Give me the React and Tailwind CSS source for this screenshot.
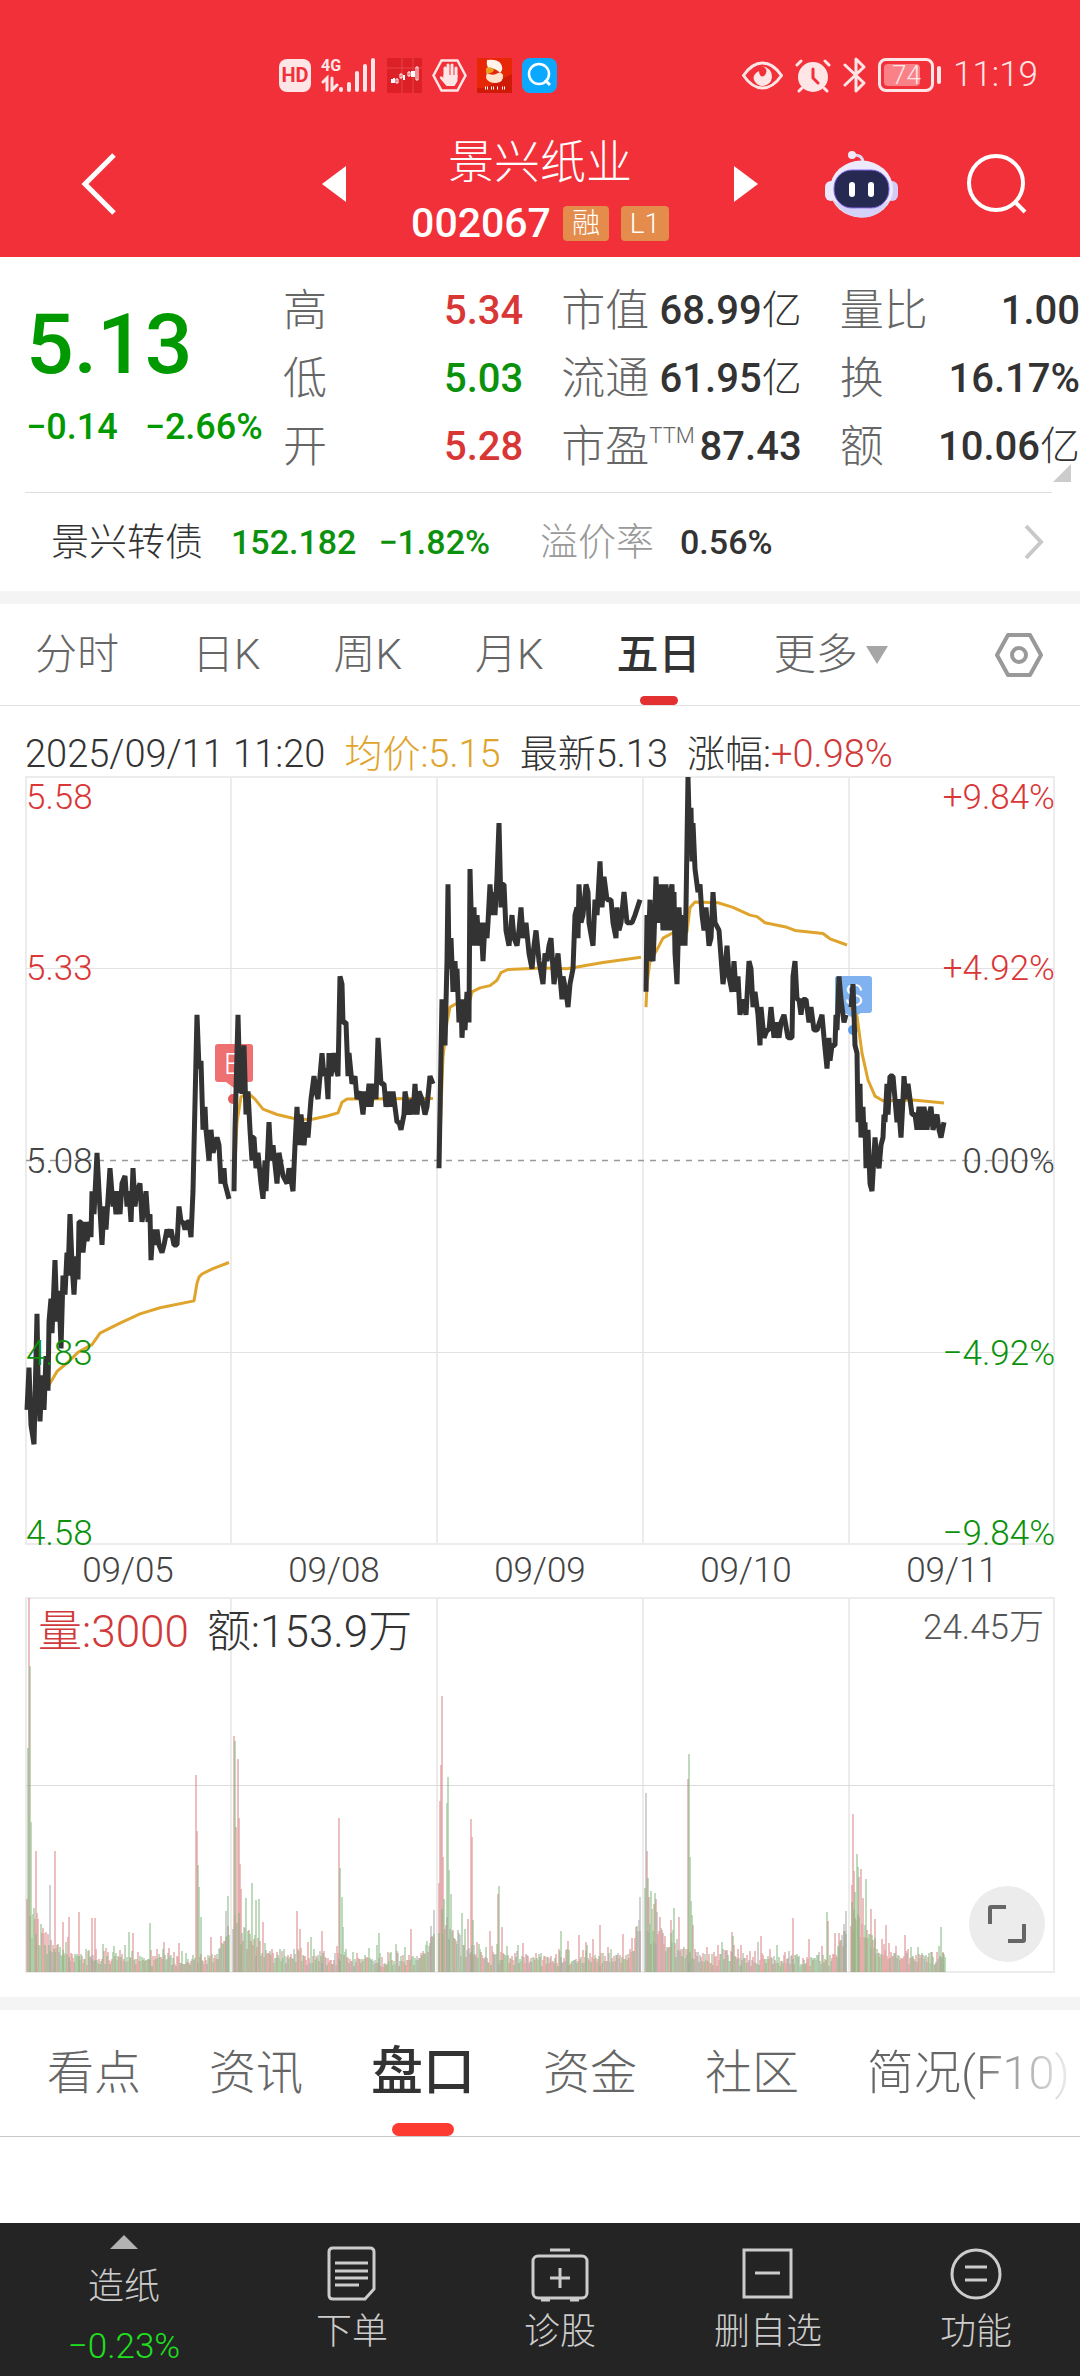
import React from 'react';

const GREEN = '#0b910b';
const RED = '#d93636';

// one array per trading day, flat [x, price, x, price, ...]
const PRICE = [
  [1, 4.755, 3, 4.81, 5, 4.735, 8, 4.71, 11, 4.88, 12, 4.8, 14, 4.74, 16, 4.8, 18, 4.755, 20, 4.825, 22, 4.78, 23, 4.87, 25, 4.9, 26, 4.855, 29, 4.95, 31, 4.87, 33, 4.91, 35, 4.835, 37, 4.93, 39, 4.905, 41, 4.96, 42, 4.93, 44, 5.01, 46, 4.945, 48, 4.905, 50, 4.955, 52, 4.925, 53, 5, 55, 5, 57, 4.96, 60, 5, 61, 4.975, 64, 5, 65, 4.98, 66, 5.04, 68, 5.01, 71, 5.09, 73, 5.04, 76, 4.97, 78, 5.02, 80, 4.99, 82, 5.03, 84, 5.07, 87, 5.02, 88, 5.04, 90, 5.01, 92, 5.04, 94, 5.01, 96, 5.05, 99, 5.06, 101, 5.02, 103, 5.04, 105, 5, 107, 5.07, 109, 5.02, 111, 5.04, 114, 5.05, 116, 5, 120, 5.04, 122, 5, 124, 5.01, 125, 4.95, 127, 4.99, 129, 4.97, 131, 4.99, 133, 4.97, 136, 4.96, 138, 4.97, 141, 4.99, 143, 4.98, 145, 4.99, 148, 4.97, 151, 4.97, 153, 5.02, 155, 5, 157, 5, 159, 4.99, 161, 5, 163, 5, 165, 4.98, 167, 5.04, 171, 5.27, 173, 5.2, 175, 5.21, 177, 5.12, 179, 5.15, 180, 5.12, 183, 5.08, 185, 5.12, 187, 5.09, 191, 5.11, 193, 5.1, 195, 5.05, 198, 5.07, 199, 5.05, 203, 5.03],
  [208, 5.04, 209, 5.12, 212, 5.27, 214, 5.17, 216, 5.17, 218, 5.23, 220, 5.14, 222, 5.17, 224, 5.12, 226, 5.08, 227, 5.11, 228, 5.11, 230, 5.07, 232, 5.09, 235, 5.05, 237, 5.03, 239, 5.08, 240, 5.04, 243, 5.13, 245, 5.08, 247, 5.1, 251, 5.05, 253, 5.09, 257, 5.06, 261, 5.05, 263, 5.07, 267, 5.04, 269, 5.1, 271, 5.15, 273, 5.1, 275, 5.14, 278, 5.1, 280, 5.13, 282, 5.11, 285, 5.16, 288, 5.19, 290, 5.17, 292, 5.16, 296, 5.22, 298, 5.19, 300, 5.2, 302, 5.16, 303, 5.22, 305, 5.19, 308, 5.22, 310, 5.2, 312, 5.19, 314, 5.32, 316, 5.31, 317, 5.26, 320, 5.26, 322, 5.19, 323, 5.22, 326, 5.18, 329, 5.19, 331, 5.16, 334, 5.17, 337, 5.14, 339, 5.17, 341, 5.15, 343, 5.18, 345, 5.15, 347, 5.18, 350, 5.16, 352, 5.24, 355, 5.18, 358, 5.18, 360, 5.15, 363, 5.17, 365, 5.15, 367, 5.17, 371, 5.13, 373, 5.13, 375, 5.12, 378, 5.14, 379, 5.17, 383, 5.14, 386, 5.16, 387, 5.14, 389, 5.18, 391, 5.14, 393, 5.17, 396, 5.16, 399, 5.14, 401, 5.15, 404, 5.19, 407, 5.18],
  [413, 5.07, 416, 5.29, 419, 5.23, 421, 5.34, 422, 5.44, 423, 5.33, 425, 5.37, 427, 5.3, 429, 5.34, 430, 5.31, 431, 5.33, 433, 5.26, 435, 5.29, 436, 5.24, 438, 5.29, 439, 5.25, 441, 5.3, 443, 5.26, 444, 5.46, 446, 5.36, 448, 5.41, 449, 5.36, 451, 5.4, 453, 5.36, 455, 5.39, 457, 5.34, 459, 5.39, 461, 5.37, 462, 5.39, 464, 5.44, 466, 5.4, 467, 5.43, 469, 5.4, 471, 5.45, 473, 5.52, 475, 5.41, 476, 5.44, 478, 5.44, 480, 5.38, 483, 5.36, 486, 5.4, 488, 5.37, 491, 5.36, 493, 5.38, 495, 5.41, 497, 5.37, 500, 5.39, 503, 5.35, 506, 5.33, 508, 5.36, 510, 5.38, 513, 5.34, 517, 5.31, 519, 5.35, 521, 5.34, 523, 5.36, 525, 5.37, 528, 5.31, 532, 5.35, 534, 5.32, 536, 5.29, 537, 5.32, 540, 5.3, 542, 5.28, 544, 5.31, 547, 5.33, 549, 5.4, 551, 5.41, 552, 5.37, 553, 5.44, 555, 5.39, 557, 5.4, 560, 5.44, 562, 5.43, 563, 5.39, 567, 5.36, 569, 5.42, 571, 5.4, 574, 5.47, 576, 5.41, 578, 5.45, 581, 5.42, 585, 5.42, 587, 5.39, 590, 5.37, 591, 5.41, 593, 5.38, 595, 5.39, 598, 5.43, 601, 5.39, 606, 5.39, 609, 5.4, 614, 5.42],
  [620, 5.3, 621, 5.4, 622, 5.34, 624, 5.42, 625, 5.35, 627, 5.34, 628, 5.37, 630, 5.45, 632, 5.39, 635, 5.44, 637, 5.38, 640, 5.44, 642, 5.38, 643, 5.42, 646, 5.44, 647, 5.38, 648, 5.43, 649, 5.35, 651, 5.31, 653, 5.41, 655, 5.36, 657, 5.4, 659, 5.36, 660, 5.41, 662, 5.58, 664, 5.48, 665, 5.54, 666, 5.47, 667, 5.52, 669, 5.46, 672, 5.43, 674, 5.44, 676, 5.4, 678, 5.38, 680, 5.41, 683, 5.36, 685, 5.37, 687, 5.43, 689, 5.39, 693, 5.38, 697, 5.31, 699, 5.33, 701, 5.36, 703, 5.32, 706, 5.3, 708, 5.34, 710, 5.3, 712, 5.32, 714, 5.27, 717, 5.29, 720, 5.27, 723, 5.34, 725, 5.33, 727, 5.28, 729, 5.3, 732, 5.27, 734, 5.23, 735, 5.28, 738, 5.24, 741, 5.25, 743, 5.25, 745, 5.28, 748, 5.24, 750, 5.26, 753, 5.24, 755, 5.26, 758, 5.27, 762, 5.24, 766, 5.24, 767, 5.32, 769, 5.34, 771, 5.29, 773, 5.29, 775, 5.27, 777, 5.29, 780, 5.29, 783, 5.26, 785, 5.28, 788, 5.25, 791, 5.25, 796, 5.27, 798, 5.24, 801, 5.2, 803, 5.24, 804, 5.21, 806, 5.23, 809, 5.23, 810, 5.27, 811, 5.25, 813, 5.32, 815, 5.29, 818, 5.26, 820, 5.27],
  [825, 5.28, 827, 5.31, 829, 5.23, 831, 5.22, 832, 5.13, 834, 5.18, 835, 5.11, 837, 5.15, 838, 5.11, 839, 5.13, 840, 5.07, 842, 5.12, 844, 5.05, 846, 5.04, 849, 5.11, 851, 5.08, 853, 5.07, 855, 5.1, 857, 5.11, 858, 5.14, 859, 5.13, 861, 5.18, 862, 5.14, 864, 5.19, 867, 5.19, 869, 5.16, 871, 5.13, 872, 5.16, 875, 5.11, 877, 5.16, 878, 5.19, 880, 5.16, 882, 5.18, 884, 5.16, 886, 5.14, 889, 5.14, 891, 5.12, 893, 5.15, 896, 5.12, 898, 5.15, 901, 5.12, 903, 5.14, 905, 5.15, 907, 5.12, 911, 5.14, 913, 5.12, 915, 5.11, 918, 5.13],
];

const AVERAGE = [
  [7, 4.775, 22, 4.785, 31, 4.805, 41, 4.816, 52, 4.83, 66, 4.84, 74, 4.855, 94, 4.868, 114, 4.88, 134, 4.888, 168, 4.897, 171, 4.92, 173, 4.928, 176, 4.932, 187, 4.939, 203, 4.947],
  [208, 5.05, 211, 5.13, 215, 5.163, 222, 5.168, 229, 5.16, 237, 5.147, 251, 5.14, 267, 5.135, 284, 5.133, 301, 5.138, 312, 5.142, 316, 5.156, 321, 5.16, 407, 5.161],
  [414, 5.11, 417, 5.215, 421, 5.26, 424, 5.28, 431, 5.285, 444, 5.289, 446, 5.3, 454, 5.305, 464, 5.308, 471, 5.315, 475, 5.325, 482, 5.329, 517, 5.331, 541, 5.33, 577, 5.338, 615, 5.345],
  [620, 5.28, 621, 5.31, 624, 5.34, 631, 5.355, 637, 5.37, 647, 5.377, 661, 5.378, 664, 5.41, 669, 5.417, 692, 5.416, 707, 5.41, 724, 5.4, 731, 5.398, 739, 5.39, 761, 5.384, 769, 5.38, 797, 5.376, 804, 5.369, 821, 5.361],
  [825, 5.28, 831, 5.268, 836, 5.22, 842, 5.185, 849, 5.164, 857, 5.158, 887, 5.159, 918, 5.155],
];

// [x, height, direction] for the minutes that stand out; r = up, g = down, n = flat
const SPIKES = [
  [2, 224, 'g'], [3, 374, 'r'], [4, 306, 'g'], [5, 150, 'g'], [10, 121, 'r'], [24, 87, 'n'], [29, 121, 'r'], [37, 50, 'r'], [43, 55, 'r'], [53, 60, 'r'], [66, 54, 'r'], [69, 54, 'r'], [103, 40, 'g'], [107, 39, 'r'], [124, 49, 'g'], [153, 29, 'r'], [170, 197, 'r'], [171, 141, 'r'], [172, 107, 'g'], [173, 85, 'g'], [175, 55, 'g'], [200, 61, 'n'], [202, 76, 'g'],
  [208, 236, 'r'], [209, 231, 'g'], [210, 145, 'r'], [212, 213, 'r'], [213, 154, 'r'], [214, 108, 'r'], [215, 83, 'r'], [220, 74, 'g'], [226, 89, 'g'], [230, 72, 'g'], [233, 73, 'g'], [237, 50, 'r'], [271, 61, 'r'], [274, 43, 'r'], [296, 41, 'r'], [313, 154, 'r'], [314, 104, 'g'], [316, 75, 'g'], [317, 45, 'g'], [353, 39, 'g'], [370, 28, 'g'], [405, 46, 'n'], [408, 62, 'n'],
  [413, 89, 'r'], [414, 171, 'r'], [415, 207, 'r'], [416, 276, 'r'], [417, 115, 'r'], [421, 169, 'g'], [422, 195, 'g'], [423, 102, 'g'], [425, 78, 'g'], [436, 59, 'g'], [445, 153, 'r'], [446, 135, 'r'], [447, 52, 'g'], [464, 41, 'r'], [472, 78, 'r'], [473, 86, 'g'], [476, 45, 'r'], [535, 41, 'g'], [542, 31, 'r'], [553, 37, 'r'], [560, 30, 'r'], [574, 47, 'r'], [612, 41, 'n'], [614, 75, 'n'],
  [619, 58, 'g'], [620, 179, 'n'], [621, 121, 'r'], [622, 94, 'g'], [623, 75, 'r'], [625, 81, 'g'], [628, 68, 'r'], [630, 73, 'r'], [634, 55, 'r'], [645, 52, 'r'], [648, 64, 'g'], [653, 55, 'r'], [662, 193, 'r'], [663, 218, 'g'], [664, 115, 'g'], [665, 71, 'g'], [666, 57, 'g'], [667, 47, 'r'], [696, 30, 'g'], [706, 40, 'r'], [707, 36, 'g'], [715, 27, 'r'], [735, 36, 'r'], [767, 54, 'r'], [801, 60, 'g'], [802, 51, 'r'], [809, 39, 'r'], [813, 39, 'r'], [818, 48, 'n'], [820, 61, 'n'],
  [826, 87, 'r'], [827, 158, 'r'], [828, 101, 'r'], [829, 80, 'g'], [831, 118, 'g'], [832, 105, 'g'], [833, 95, 'r'], [835, 103, 'r'], [840, 93, 'g'], [845, 63, 'r'], [849, 53, 'r'], [860, 47, 'r'], [879, 37, 'r'], [915, 45, 'g'], [917, 20, 'r'],
];

const SESSIONS = [[1, 203], [207, 408], [413, 614], [619, 820], [825, 919]];
const TONES = { r: '#d98080', g: '#7fb47a', n: '#a3a3a3' };

function toPath(flat) {
  let d = '';
  for (let i = 0; i < flat.length; i += 2) {
    d += `${i ? 'L' : 'M'}${flat[i]} ${((5.58 - flat[i + 1]) * 767).toFixed(1)}`;
  }
  return d;
}

function volumePaths() {
  const out = { r: '', g: '', n: '' };
  let seed = 11;
  const rand = () => {
    seed = (seed * 16807) % 2147483647;
    return seed / 2147483647;
  };
  SESSIONS.forEach(([from, to]) => {
    for (let x = from; x <= to; x += 1) {
      const t = x - from;
      const close = to < 900 ? Math.max(0, 14 - (to - x)) * 1.8 : 0;
      const h = 5 + rand() * 10 + rand() * rand() * rand() * 34 + 62 * Math.exp(-t / 18) * (0.4 + rand() * 0.8) + close;
      const k = rand();
      const tone = k < 0.46 ? 'r' : k < 0.88 ? 'g' : 'n';
      out[tone] += `M${x} 374V${(374 - h).toFixed(0)}`;
    }
  });
  SPIKES.forEach(([x, h, tone]) => {
    out[tone] += `M${x} 374V${374 - h}`;
  });
  return out;
}

const VOLUME = volumePaths();

function StatusBar() {
  return (
    <div className="flex h-[110px] items-center justify-between pt-10 pr-[42px] pl-[279px] text-[#ffe6e6]">
      <div className="flex items-center gap-[10px]">
        <span className="flex h-[33px] w-8 items-center justify-center rounded-lg bg-[#ffe6e6] text-xl font-bold text-[#f13039]">HD</span>
        <div className="relative h-[34px] w-[56px]">
          <span className="absolute top-0 left-0 text-base leading-4 font-bold">4G</span>
          <svg className="h-full w-full" viewBox="0 0 56 34" fill="none" stroke="currentColor" strokeLinecap="round">
            <path d="M20 31v1M28 26v6M36 15v17M44 8v24M52 2v30" strokeWidth="4" />
            <path d="M2 24l4-4v12M11 20v12l5-5" strokeWidth="3" />
          </svg>
        </div>
        <svg className="h-[35px] w-[35px]" viewBox="0 0 35 35">
          <path d="M0 0h35v35H0z" fill="#dd2027" />
          <path d="M0 10h35M15 0v35M26 0v35" stroke="#e4444a" strokeWidth="1" />
          <path d="M5 21v4M7 20v5M17 17v5M25 13v6M27 13v6" stroke="#fff" strokeWidth="2" />
          <path d="M9 21h2v4H9zM13 16h2v4h-2zM21 14h2v4h-2zM29 9h2v13h-2z" fill="none" stroke="#fff" strokeWidth="1" />
        </svg>
        <svg className="h-[35px] w-[35px]" viewBox="0 0 35 35">
          <path d="M9.500 2.500h16l8 15-8 15h-16l-8-15z" fill="none" stroke="#ffe6e6" strokeWidth="2.500" />
          <path d="M13 19V10M16 18V7M20 18V7M24 19V10" stroke="#ffe6e6" strokeWidth="3" strokeLinecap="round" />
          <path d="M11.500 17h14v6l-3 5h-8l-6-7c-2-3 1-3 3-1z" fill="#ffe6e6" />
        </svg>
        <svg className="h-[35px] w-[35px]" viewBox="0 0 35 35">
          <path d="M0 0h35v35H0z" fill="#cf1a08" />
          <path d="M0 0h35v16L8 30H0z" fill="#e82706" />
          <path d="M10 2q11-1 14 4 3 5-1 9-4-5-12-5-2-4-1-8z" fill="#fff3ea" />
          <path d="M10 15q5 3 9 1 5-3 7 1 1 7-7 8-8 0-10-5 0-3 1-5z" fill="#ffe1cc" />
          <path d="M9 10q6-2 8 2-2 4-8 3z" fill="#e8a01c" />
          <path d="M8 30h3M14 30h3M20 30h2M25 30h3" stroke="#fff" strokeWidth="3" strokeDasharray="1 1" />
        </svg>
        <svg className="h-[35px] w-[35px]" viewBox="0 0 35 35" fill="none" stroke="#fff">
          <rect width="35" height="35" rx="8" fill="#0aa9ff" stroke="none" />
          <circle cx="17" cy="16" r="10" strokeWidth="2.500" />
          <path d="M23 22l5 5" strokeWidth="3" />
        </svg>
      </div>
      <div className="flex items-center gap-3">
        <svg className="h-[35px] w-[41px]" viewBox="0 0 41 35" fill="none" stroke="currentColor">
          <path d="M1.500 17.500Q10 5 20.500 5t19 12.500Q31 30 20.500 30T1.500 17.500z" strokeWidth="3" />
          <path d="M20 8q7 3 3 9-3 3-5 0-1-2-1-4-7 4-5 9 3 6 9 6 8-1 9-9 0-9-10-11z" fill="currentColor" stroke="none" />
        </svg>
        <svg className="h-[35px] w-9" viewBox="0 0 36 35" fill="none" stroke="currentColor" strokeLinecap="round">
          <circle cx="18" cy="19" r="15" fill="currentColor" stroke="none" />
          <path d="M2 7l4-4M34 7l-4-4M7 30l-3 3M29 30l3 3" strokeWidth="3" />
          <path d="M18 11v9l5 5" stroke="#f13039" strokeWidth="3" />
        </svg>
        <svg className="h-9 w-[23px]" viewBox="0 0 23 36" fill="none" stroke="currentColor" strokeWidth="3" strokeLinejoin="round" strokeLinecap="round">
          <path d="M2 8l19 18-8 8V2l8 8L2 28" />
        </svg>
        <div className="flex items-center gap-[3px]">
          <div className="h-[34px] w-[56px] rounded-lg border-[3px] border-current p-[3px]">
            <div className="flex h-full w-[36px] items-center rounded-sm bg-[#f98187] pl-[8px] text-[26px] font-light">74</div>
          </div>
          <div className="h-[18px] w-1 rounded-sm bg-current" />
        </div>
        <span className="text-[35px] leading-10 font-light">11:19</span>
      </div>
    </div>
  );
}

function Header() {
  return (
    <header className="bg-[#f13039] text-white">
      <StatusBar />
      <div className="grid h-[147px] grid-cols-[1fr_436px_1fr] items-center">
        <button className="ml-[78px] w-10" aria-label="返回">
          <svg className="h-16 w-10" viewBox="0 0 40 64" fill="none" stroke="currentColor" strokeWidth="5">
            <path d="M36 3L7 32l29 29" />
          </svg>
        </button>
        <div className="flex items-center justify-between">
          <button aria-label="上一只">
            <svg className="h-9 w-6" viewBox="0 0 24 36"><path d="M24 0v36L0 18z" fill="currentColor" /></svg>
          </button>
          <div className="pt-5 text-center">
            <h1 className="text-[46px] leading-[60px] font-light">景兴纸业</h1>
            <div className="flex h-16 items-center justify-center gap-3">
              <span className="text-[41px] font-medium">002067</span>
              <span className="flex h-[35px] w-[46px] items-center justify-center rounded-sm bg-[#e48c4b] text-[28px] font-light">融</span>
              <span className="flex h-[35px] w-[48px] items-center justify-center rounded-sm bg-[#e48c4b] text-[28px] font-light">L1</span>
            </div>
          </div>
          <button aria-label="下一只">
            <svg className="h-9 w-6" viewBox="0 0 24 36"><path d="M0 0v36l24-18z" fill="currentColor" /></svg>
          </button>
        </div>
        <div className="flex items-center justify-between pr-[52px] pl-[67px]">
          <button aria-label="智能助手">
            <svg className="h-[68px] w-[73px]" viewBox="0 0 73 68">
              <path d="M27 5q11-1 11 8" fill="none" stroke="#ded8f5" strokeWidth="3" />
              <circle cx="27" cy="5" r="4" fill="#efeafc" />
              <rect x="0" y="31" width="12" height="20" rx="6" fill="#ece8fb" />
              <rect x="61" y="31" width="12" height="20" rx="6" fill="#d3cbf5" />
              <ellipse cx="36.500" cy="39" rx="31.500" ry="28.500" fill="#edeafb" />
              <path d="M8 50q10 17 28.500 17.500T65 50q-12 9-28.500 9T8 50z" fill="#d5d2f7" />
              <rect x="9" y="20" width="55" height="38" rx="18" fill="#262a52" stroke="#8668f0" strokeWidth="1" />
              <rect x="24" y="32" width="6" height="15" rx="3" fill="#fff" />
              <rect x="43" y="32" width="6" height="15" rx="3" fill="#fff" />
            </svg>
          </button>
          <button aria-label="搜索">
            <svg className="h-[62px] w-[62px]" viewBox="0 0 62 62" fill="none" stroke="currentColor" strokeWidth="4">
              <circle cx="30" cy="30" r="27" />
              <path d="M49 49l10 10" />
            </svg>
          </button>
        </div>
      </div>
    </header>
  );
}

const QUOTES = [
  { label: '高', value: '5.34', tone: 'text-[#d93636]' },
  { label: '市值', value: '68.99', unit: '亿' },
  { label: '量比', value: '1.00' },
  { label: '低', value: '5.03', tone: 'text-[#0b910b]' },
  { label: '流通', value: '61.95', unit: '亿' },
  { label: '换', value: '16.17%' },
  { label: '开', value: '5.28', tone: 'text-[#d93636]' },
  { label: '市盈', sup: 'TTM', value: '87.43' },
  { label: '额', value: '10.06', unit: '亿' },
];

function Quote() {
  return (
    <section>
      <div className="relative flex pt-5 pb-[11px] pl-[26px]">
        <div className="w-[257px] text-[#009900]">
          <div className="pt-4 text-[84px] leading-[104px] font-medium">5.13</div>
          <div className="flex gap-[27px] text-[36px] leading-[60px] font-medium whitespace-nowrap">
            <span>−0.14</span>
            <span>−2.66%</span>
          </div>
        </div>
        <dl className="grid flex-1 grid-cols-3 gap-x-[38px]">
          {QUOTES.map(({ label, sup, value, unit, tone }) => (
            <div key={label} className="flex h-[68px] items-center justify-between whitespace-nowrap">
              <dt className="flex items-center text-[44px] font-light text-[#666]">
                {label}
                {sup && <sup className="text-[22px]">{sup}</sup>}
              </dt>
              <dd className={`flex items-center text-[40px] font-medium ${tone || 'text-[#333]'}`}>
                {value}
                {unit && <span className="font-light">{unit}</span>}
              </dd>
            </div>
          ))}
        </dl>
        <svg className="absolute right-[9px] bottom-[10px] h-[18px] w-[18px]" viewBox="0 0 18 18">
          <path d="M18 0v18H0z" fill="#ccc" />
        </svg>
      </div>
      <a href="#bond" className="mr-7 ml-[25px] flex h-[99px] items-center border-t border-[#dedede] pl-[26px] text-[34px] font-medium">
        <span className="text-[38px] font-light text-[#333]">景兴转债</span>
        <span className="ml-7 text-[#0b910b]">152.182</span>
        <span className="ml-[22px] text-[#0b910b]">−1.82%</span>
        <span className="ml-[50px] text-[38px] font-light text-[#999]">溢价率</span>
        <span className="ml-[26px] text-[#333]">0.56%</span>
        <svg className="mr-2 ml-auto h-9 w-5" viewBox="0 0 20 36" fill="none" stroke="#c8c8c8" strokeWidth="4">
          <path d="M2 2l15 16L2 34" />
        </svg>
      </a>
    </section>
  );
}

function PeriodTabs() {
  return (
    <nav className="flex h-[102px] items-stretch gap-[73px] border-b border-[#e3e3e3] pr-[36px] pl-[35px] text-[42px] font-light whitespace-nowrap text-[#666]">
      <button>分时</button>
      <button>日K</button>
      <button>周K</button>
      <button>月K</button>
      <button className="relative font-medium text-[#333]">
        五日
        <span className="absolute bottom-0 left-1/2 h-[9px] w-[38px] -translate-x-1/2 rounded-full bg-[#e33030]" />
      </button>
      <button className="flex items-center gap-2">
        更多
        <svg className="h-[18px] w-[22px]" viewBox="0 0 22 18"><path d="M0 0h22L11 18z" fill="#a6a6a6" /></svg>
      </button>
      <button className="ml-auto" aria-label="设置">
        <svg className="h-[46px] w-[50px]" viewBox="0 0 50 46" fill="none" stroke="#999" strokeWidth="4">
          <path d="M14 3h22l11 20-11 20H14L3 23z" strokeLinejoin="round" />
          <circle cx="25" cy="23" r="7" />
        </svg>
      </button>
    </nav>
  );
}

const DAY_LINES = [205, 411, 617, 823];

function PriceChart() {
  return (
    <svg className="block w-full overflow-visible" viewBox="-1 -1 1030 769" fill="none">
      <g stroke="#ececec" strokeWidth="2">
        <rect x="0" y="0" width="1028" height="767" />
        {DAY_LINES.map((x) => <path key={x} d={`M${x} 0V767`} />)}
      </g>
      <path d="M0 191.500H1028M0 575.500H1028" stroke="#e2e2e2" />
      <path d="M0 383.500H1028" stroke="#999" strokeDasharray="6 6" strokeWidth="1.500" />

      {/* buy / sell flags */}
      <g>
        <path d="M192 267h32a3 3 0 0 1 3 3v32a3 3 0 0 1-3 3h-9l-7 6-8-6h-8a3 3 0 0 1-3-3v-32a3 3 0 0 1 3-3z" fill="#ee7071" />
        <circle cx="207" cy="322" r="5" fill="#e75757" />
        <text x="207" y="297" textAnchor="middle" fontSize="29" fontWeight="300" fill="#fff">B</text>
        <path d="M812 199h31a3 3 0 0 1 3 3v31a3 3 0 0 1-3 3h-8l-8 5-8-5h-7a3 3 0 0 1-3-3v-31a3 3 0 0 1 3-3z" fill="#80b2f0" />
        <circle cx="827" cy="253" r="5" fill="#5f9ce9" />
        <text x="828" y="229" textAnchor="middle" fontSize="31" fontWeight="300" fill="#fff">S</text>
      </g>

      <g stroke="#dfa42c" strokeWidth="3" strokeLinejoin="round">
        {AVERAGE.map((day) => <path key={day[0]} d={toPath(day)} />)}
      </g>
      <g stroke="#333" strokeWidth="5" strokeLinejoin="bevel">
        {PRICE.map((day) => <path key={day[0]} d={toPath(day)} />)}
      </g>

      <g fontSize="35" fontWeight="300">
        <text x="0" y="32" fill={RED}>5.58</text>
        <text x="0" y="203" fill={RED}>5.33</text>
        <text x="0" y="396" fill="#444">5.08</text>
        <text x="0" y="588" fill={GREEN}>4.83</text>
        <text x="0" y="768" fill={GREEN}>4.58</text>
      </g>
      <g fontSize="35" fontWeight="300" textAnchor="end">
        <text x="1029" y="32" fill={RED}>+9.84%</text>
        <text x="1029" y="203" fill={RED}>+4.92%</text>
        <text x="1029" y="396" fill="#444">0.00%</text>
        <text x="1029" y="588" fill={GREEN}>−4.92%</text>
        <text x="1029" y="768" fill={GREEN}>−9.84%</text>
      </g>
    </svg>
  );
}

function VolumeChart() {
  return (
    <div className="relative">
      <svg className="block w-full" viewBox="-1 -1 1030 376" fill="none">
        <g stroke="#ececec" strokeWidth="2">
          <rect x="0" y="0" width="1028" height="374" />
          {DAY_LINES.map((x) => <path key={x} d={`M${x} 0V374`} />)}
        </g>
        <path d="M0 187.500H1028" stroke="#dcdcdc" />
        {Object.entries(VOLUME).map(([tone, d]) => (
          <path key={tone} d={d} stroke={TONES[tone]} strokeOpacity="0.65" strokeWidth="1.500" />
        ))}
      </svg>
      <div className="absolute inset-x-0 top-0 flex items-start justify-between pt-[6px] pr-[11px] pl-[13px] font-light">
        <p className="flex gap-[18px] text-[44px] leading-[58px] text-[#333]">
          <span className="text-[#d03a3a]">量:3000</span>
          <span>额:153.9万</span>
        </p>
        <span className="text-[35px] leading-[50px] text-[#555]">24.45万</span>
      </div>
      <button className="absolute right-[10px] bottom-[11px] flex h-[76px] w-[76px] items-center justify-center rounded-full bg-[#ececec]" aria-label="全屏">
        <svg className="h-10 w-10" viewBox="0 0 40 40" fill="none" stroke="#666" strokeWidth="4">
          <path d="M3 20V4q0-1 1-1h15M37 20v16q0 1-1 1H21" />
        </svg>
      </button>
    </div>
  );
}

function SectionTabs() {
  return (
    <nav className="flex h-[127px] items-stretch gap-[68px] overflow-hidden border-b border-[#c9c9c9] pl-[47px] text-[47px] font-light whitespace-nowrap text-[#666]">
      <button>看点</button>
      <button>资讯</button>
      <button className="relative text-[52px] font-medium text-[#333]">
        盘口
        <span className="absolute bottom-0 left-1/2 h-[13px] w-[62px] -translate-x-1/2 rounded-full bg-[#fd3b31]" />
      </button>
      <button>资金</button>
      <button>社区</button>
      <button className="bg-linear-to-r from-[#666] from-50% to-[#eee] bg-clip-text text-transparent">简况(F10)</button>
    </nav>
  );
}

const ACTIONS = [
  {
    label: '下单',
    icon: (
      <>
        <path d="M8 3h37q4 0 4 4v37L40 54H8q-4 0-4-4V7q0-4 4-4z" />
        <path d="M10 18h33M10 26h33M10 33h33M10 40h24" />
      </>
    ),
  },
  {
    label: '诊股',
    icon: (
      <>
        <path d="M17 5h20" />
        <rect x="0" y="11" width="54" height="42" rx="5" />
        <path d="M17 33h20M27 23v20M8 55h9M37 55h9" />
      </>
    ),
  },
  {
    label: '删自选',
    icon: (
      <>
        <rect x="3" y="5" width="47" height="47" />
        <path d="M14 28h25" />
      </>
    ),
  },
  {
    label: '功能',
    icon: (
      <>
        <circle cx="27" cy="29" r="24" />
        <path d="M16 22h22M16 35h22" />
      </>
    ),
  },
];

function BottomBar() {
  return (
    <footer className="grid h-[153px] grid-cols-[248fr_208fr_208fr_208fr_208fr] bg-[#242424] text-[36px] font-light text-[#ccc]">
      <button className="flex flex-col items-center pt-3">
        <svg className="h-[14px] w-[28px]" viewBox="0 0 28 14"><path d="M14 0l14 14H0z" fill="#b3b3b3" /></svg>
        <span className="mt-[14px] leading-12">造纸</span>
        <span className="mt-3 text-[35px] leading-12 text-[#1fe01f]">−0.23%</span>
      </button>
      {ACTIONS.map(({ label, icon }) => (
        <button key={label} className="flex flex-col items-center pt-[22px]">
          <svg className="h-[58px] w-[54px] overflow-visible" viewBox="0 0 54 58" fill="none" stroke="#ccc" strokeWidth="3">{icon}</svg>
          <span className="mt-[5px] leading-12">{label}</span>
        </button>
      ))}
    </footer>
  );
}

export default function App() {
  return (
    <div className="flex min-h-screen flex-col bg-white font-['Roboto','Noto_Sans_CJK_SC',sans-serif]">
      <Header />
      <main className="flex-1">
        <Quote />
        <div className="h-[13px] bg-[#f4f4f4]" />
        <PeriodTabs />
        <section className="px-[25px]">
          <p className="flex h-[70px] items-end gap-[19px] text-[38px] leading-[44px] font-light whitespace-nowrap text-[#333]">
            <span>2025/09/11 11:20</span>
            <span className="text-[#dfa42c]">均价:5.15</span>
            <span>最新5.13</span>
            <span>涨幅:<span className="text-[#d03a3a]">+0.98%</span></span>
          </p>
          <PriceChart />
          <div className="grid h-[52px] grid-cols-5 items-center text-center text-[35px] font-light text-[#444]">
            <span>09/05</span>
            <span>09/08</span>
            <span>09/09</span>
            <span>09/10</span>
            <span>09/11</span>
          </div>
          <VolumeChart />
        </section>
        <div className="mt-[24px] h-[13px] bg-[#f4f4f4]" />
        <SectionTabs />
      </main>
      <BottomBar />
    </div>
  );
}
